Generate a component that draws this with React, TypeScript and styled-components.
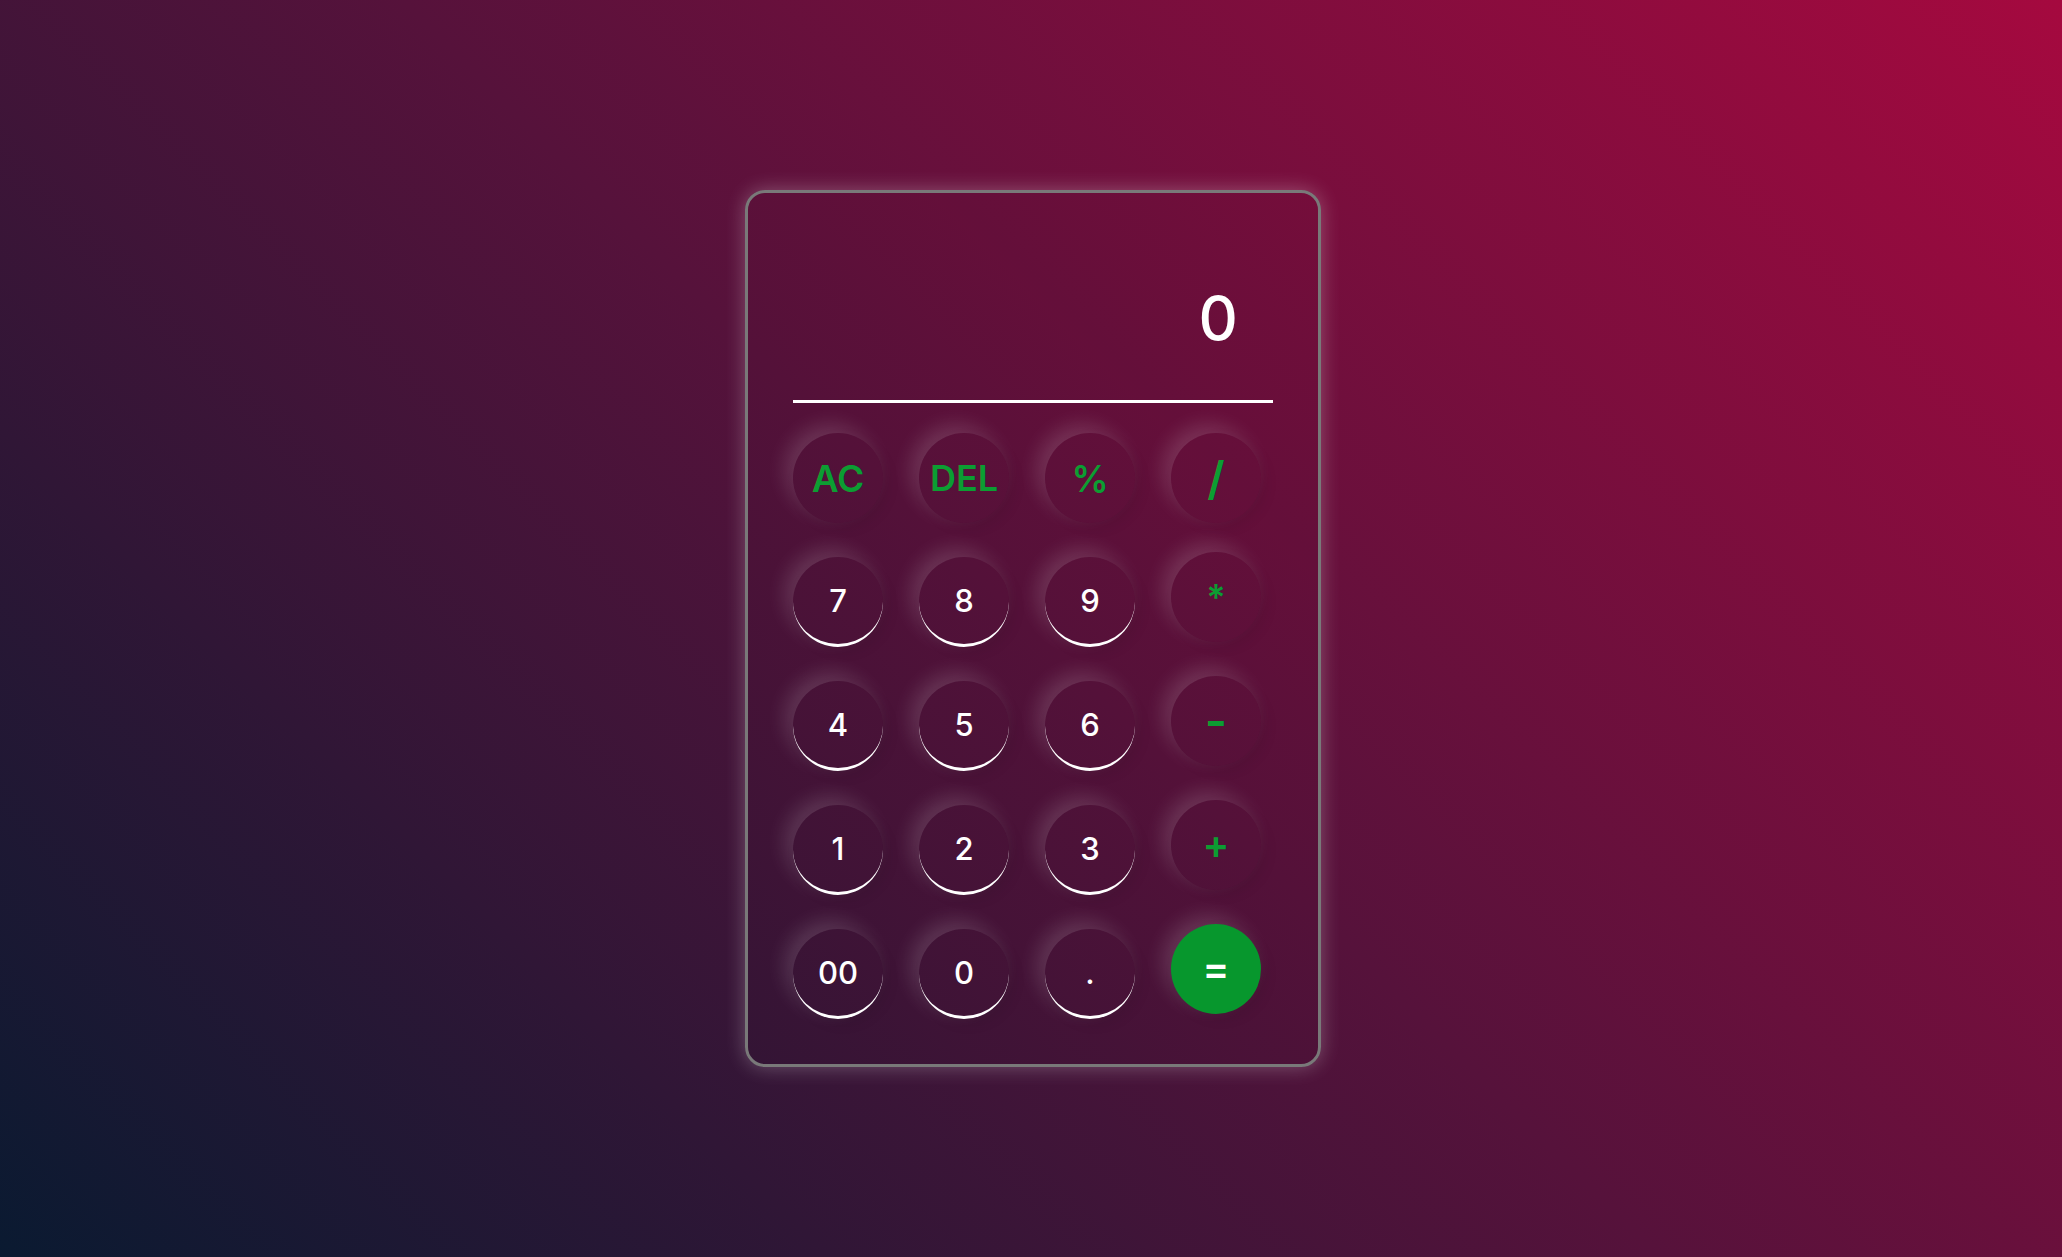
import React from "react";
import styled, { createGlobalStyle, css } from "styled-components";

const GlobalStyle = createGlobalStyle`
  *, *::before, *::after { box-sizing: border-box; margin: 0; padding: 0; }
  html, body { height: 100%; }
  body {
    font-family: Inter, "Noto Sans", sans-serif;
    background: linear-gradient(45deg, #0a1a31 0%, #56123b 50%, #a5093f 100%);
    overflow: hidden;
  }
  #root { height: 100%; }
`;

const Page = styled.main`
  height: 100vh;
  display: flex;
  align-items: center;
  justify-content: center;
  padding-left: 4px;
`;

const Card = styled.section`
  width: 576px;
  padding: 44px 45px 45px;
  border: 3px solid #797979;
  border-radius: 20px;
  background: rgba(0, 0, 0, 0.02);
  box-shadow: 0 0 20px rgba(255, 255, 255, 0.28);
`;

const Display = styled.div`
  height: 166px;
  display: flex;
  align-items: center;
  justify-content: flex-end;
  padding-right: 35px;
  border-bottom: 3px solid #ffffff;
  color: #ffffff;
  font-size: 61px;
  font-weight: 500;
  line-height: 1;
`;

const Keys = styled.div`
  margin-top: 30px;
  display: grid;
  grid-template-columns: repeat(4, 90px);
  column-gap: 36px;
  row-gap: 29px;
  align-items: start;
`;

type Kind = "digit" | "op" | "equals";

const Key = styled.button<{ $kind: Kind; $size?: number }>`
  width: 90px;
  height: 90px;
  border-radius: 50%;
  border: none;
  background: transparent;
  display: flex;
  align-items: center;
  justify-content: center;
  font-family: Inter, "Noto Sans", sans-serif;
  font-weight: 600;
  line-height: 1;
  cursor: pointer;
  box-shadow: -8px -8px 20px rgba(255, 255, 255, 0.15),
    5px 5px 14px rgba(0, 0, 0, 0.07);

  ${({ $kind, $size }) =>
    $kind === "digit"
      ? css`
          margin-top: 5px;
          color: #ffffff;
          font-size: ${$size ?? 31}px;
          font-weight: 500;
          border-bottom: 3px solid #ffffff;
        `
      : $kind === "op"
      ? css`
          color: #0c9d32;
          font-size: ${$size ?? 37}px;
        `
      : css`
          background: #07972d;
          color: #ffffff;
          font-size: ${$size ?? 40}px;
        `}
`;

type KeyDef = { label: string; kind: Kind; size?: number };

const keys: KeyDef[] = [
  { label: "AC", kind: "op" },
  { label: "DEL", kind: "op", size: 36 },
  { label: "%", kind: "op" },
  { label: "/", kind: "op", size: 46 },
  { label: "7", kind: "digit" },
  { label: "8", kind: "digit" },
  { label: "9", kind: "digit" },
  { label: "*", kind: "op", size: 36 },
  { label: "4", kind: "digit" },
  { label: "5", kind: "digit" },
  { label: "6", kind: "digit" },
  { label: "-", kind: "op", size: 48 },
  { label: "1", kind: "digit" },
  { label: "2", kind: "digit" },
  { label: "3", kind: "digit" },
  { label: "+", kind: "op", size: 40 },
  { label: "00", kind: "digit" },
  { label: "0", kind: "digit" },
  { label: ".", kind: "digit" },
  { label: "=", kind: "equals" },
];

export default function App() {
  return (
    <>
      <GlobalStyle />
      <Page>
        <Card>
          <Display>0</Display>
          <Keys>
            {keys.map((k) => (
              <Key key={k.label} $kind={k.kind} $size={k.size}>
                {k.label}
              </Key>
            ))}
          </Keys>
        </Card>
      </Page>
    </>
  );
}
